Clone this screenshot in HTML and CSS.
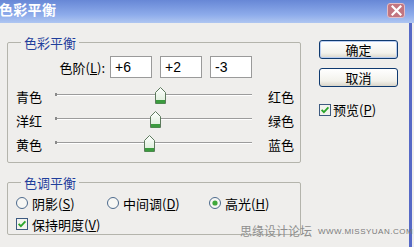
FILE: index.html
```html
<!DOCTYPE html>
<html>
<head>
<meta charset="utf-8">
<link rel="stylesheet" href="styles.css">
</head>
<body>
<div class="window">
  <div class="titlebar">
    <span class="title">色彩平衡</span>
    <span class="close">
      <svg width="11" height="11" viewBox="0 0 11 11"><path d="M1.5 1.5 L9.5 9.5 M9.5 1.5 L1.5 9.5" stroke="#fff" stroke-width="2.2" stroke-linecap="square"/></svg>
    </span>
  </div>
  <div class="client">
    <div class="left">
      <fieldset class="group g1">
        <legend>色彩平衡</legend>
        <div class="levels">
          <span class="lvl-label">色阶(<u>L</u>):</span>
          <input class="num" value="+6">
          <input class="num" value="+2">
          <input class="num" value="-3">
        </div>
        <div class="slider">
          <span class="lab">青色</span>
          <div class="track"><svg class="thumb" style="left:100px" width="11" height="17" viewBox="0 0 11 17"><defs><linearGradient id="tg" x1="0" y1="0" x2="0" y2="1"><stop offset="0" stop-color="#ffffff"/><stop offset="1" stop-color="#d9ecd6"/></linearGradient></defs><path d="M5.5 0.5 L10.5 5.5 L10.5 16.5 L0.5 16.5 L0.5 5.5 Z" fill="url(#tg)" stroke="#5d7a5d"/><rect x="1" y="13" width="9" height="3.5" fill="#3b9b3e"/></svg></div>
          <span class="lab r">红色</span>
        </div>
        <div class="slider">
          <span class="lab">洋红</span>
          <div class="track"><svg class="thumb" style="left:95px" width="11" height="17" viewBox="0 0 11 17"><path d="M5.5 0.5 L10.5 5.5 L10.5 16.5 L0.5 16.5 L0.5 5.5 Z" fill="url(#tg)" stroke="#5d7a5d"/><rect x="1" y="13" width="9" height="3.5" fill="#3b9b3e"/></svg></div>
          <span class="lab r">绿色</span>
        </div>
        <div class="slider">
          <span class="lab">黄色</span>
          <div class="track"><svg class="thumb" style="left:89px" width="11" height="17" viewBox="0 0 11 17"><path d="M5.5 0.5 L10.5 5.5 L10.5 16.5 L0.5 16.5 L0.5 5.5 Z" fill="url(#tg)" stroke="#5d7a5d"/><rect x="1" y="13" width="9" height="3.5" fill="#3b9b3e"/></svg></div>
          <span class="lab r">蓝色</span>
        </div>
      </fieldset>
      <fieldset class="group g2">
        <legend>色调平衡</legend>
        <div class="radios">
          <span class="opt opt-a">
            <svg width="12" height="12" viewBox="0 0 12 12"><circle cx="6" cy="6" r="5.5" fill="#f7f7f4" stroke="#4d6a8c"/></svg>
            <span>阴影(<u>S</u>)</span>
          </span>
          <span class="opt opt-b">
            <svg width="12" height="12" viewBox="0 0 12 12"><circle cx="6" cy="6" r="5.5" fill="#f7f7f4" stroke="#4d6a8c"/></svg>
            <span>中间调(<u>D</u>)</span>
          </span>
          <span class="opt">
            <svg width="12" height="12" viewBox="0 0 12 12"><circle cx="6" cy="6" r="5.5" fill="#f7f7f4" stroke="#4d6a8c"/><circle cx="6" cy="6" r="2.6" fill="#3fa83a"/></svg>
            <span>高光(<u>H</u>)</span>
          </span>
        </div>
        <div class="check-row">
          <svg width="12" height="12" viewBox="0 0 12 12"><rect x="0.5" y="0.5" width="11" height="11" fill="#f3f3ee" stroke="#3d5a80"/><path d="M2.6 5.8 L4.9 8.2 L9.4 3.4" fill="none" stroke="#2aa52a" stroke-width="1.8"/></svg>
          <span>保持明度(<u>V</u>)</span>
        </div>
      </fieldset>
    </div>
    <div class="right">
      <button class="btn default">确定</button>
      <button class="btn cancel">取消</button>
      <div class="chk">
        <svg width="12" height="12" viewBox="0 0 12 12"><rect x="0.5" y="0.5" width="11" height="11" fill="#f3f3ee" stroke="#3d5a80"/><path d="M2.6 5.8 L4.9 8.2 L9.4 3.4" fill="none" stroke="#2aa52a" stroke-width="1.8"/></svg>
        <span>预览(<u>P</u>)</span>
      </div>
    </div>
  </div>
  <div class="watermark"><span class="wm-cn">思缘设计论坛</span><span class="wm-en">WWW.MISSYUAN.COM</span></div>
</div>
</body>
</html>
```

FILE: styles.css
```css
* { box-sizing: border-box; }
html, body { margin: 0; padding: 0; }
body {
  width: 414px;
  height: 247px;
  overflow: hidden;
  background: #efeeec;
  font-family: "Noto Sans CJK SC", "Liberation Sans", sans-serif;
  font-size: 13px;
  color: #000;
}
.window {
  position: relative;
  height: 247px;
  display: flex;
  flex-direction: column;
}
.titlebar {
  height: 23px;
  flex: none;
  display: flex;
  align-items: flex-start;
  justify-content: space-between;
  background: linear-gradient(#6787d6, #8eaceb 65%, #afc6f1);
}
.title {
  color: #fff;
  font-weight: bold;
  font-size: 14px;
  line-height: 18px;
  margin-left: -1px;
  letter-spacing: 0.3px;
}
.close {
  width: 18px;
  height: 15px;
  margin: 3px 9px 0 0;
  border-radius: 3px;
  background: #c27580;
  border: 1px solid #e2bcc4;
  display: flex;
  align-items: center;
  justify-content: center;
}
.client {
  flex: 1;
  display: flex;
  padding: 12px 0 0 7px;
  margin-right: 2px;
  border-right: 3px solid #5669c6;
}
.left { width: 294px; flex: none; }
.group {
  margin: 0;
  padding: 0 0 6px 0;
  border: 1px solid #b4b4ac;
  border-radius: 2px;
  min-width: 0;
  width: 294px;
}
.group legend {
  margin-left: 13px;
  padding: 0 3px;
  font-size: 13px;
  line-height: 15px;
  color: #1f3f9c;
}
.g2 { margin-top: 12px; padding-bottom: 1px; }
.levels {
  display: flex;
  align-items: center;
  height: 22px;
  margin-top: 6px;
  margin-bottom: 6px;
}
.lvl-label {
  width: 97px;
  margin-right: 5px;
  text-align: right;
  line-height: 15px;
}
.num {
  width: 42px;
  height: 22px;
  margin: 0 8px 0 0;
  border: 1px solid #9a9a9a;
  background: #fff;
  padding: 0 4px;
  font-family: "Liberation Sans", sans-serif;
  font-size: 14px;
  color: #000;
  outline: none;
}
.slider {
  display: flex;
  align-items: center;
  height: 24px;
  padding-left: 8px;
}
.lab { width: 39px; line-height: 15px; }
.lab.r { width: auto; margin-left: 16px; }
.track {
  position: relative;
  width: 197px;
  height: 2px;
  margin-top: -2px;
  border-top: 1px solid #9c9c9c;
  background: #fff;
}
.track::before {
  content: "";
  position: absolute;
  left: 0;
  top: -2px;
  width: 2px;
  height: 3px;
  background: #8a8a8a;
}
.thumb {
  position: absolute;
  top: -8px;
  display: block;
}
.radios {
  display: flex;
  align-items: center;
  height: 20px;
  margin-top: 3px;
  padding-left: 8px;
}
.opt {
  display: flex;
  align-items: center;
  gap: 4px;
  line-height: 15px;
}
.opt-a { width: 91px; }
.opt-b { width: 102px; }
.check-row {
  display: flex;
  align-items: center;
  gap: 4px;
  height: 18px;
  margin-top: 2px;
  padding-left: 8px;
  line-height: 15px;
}
.right {
  display: flex;
  flex-direction: column;
  width: 79px;
  margin-left: 18px;
  padding-top: 5px;
}
.btn {
  width: 79px;
  height: 19px;
  padding: 0;
  border: 1px solid #0f3a70;
  border-radius: 3px;
  background: linear-gradient(#ffffff, #f3f2ec 70%, #d9d5c9);
  font-family: "Noto Sans CJK SC", sans-serif;
  font-size: 13px;
  line-height: 15px;
  color: #000;
}
.btn.default {
  margin-bottom: 9px;
  box-shadow: inset 0 0 0 1px #b9cdf0;
}
.btn.cancel { margin-bottom: 14px; }
.chk {
  display: flex;
  align-items: center;
  gap: 2px;
  height: 17px;
  line-height: 15px;
}
.watermark {
  position: absolute;
  left: 240px;
  top: 223px;
  display: flex;
  align-items: center;
}
.wm-cn {
  font-size: 12px;
  line-height: 15px;
  color: #8e8e8e;
}
.wm-en {
  margin-left: 6px;
  font-family: "Liberation Sans", sans-serif;
  font-size: 8px;
  letter-spacing: 0.5px;
  color: #7a7a7a;
  padding-top: 2px;
}
```
